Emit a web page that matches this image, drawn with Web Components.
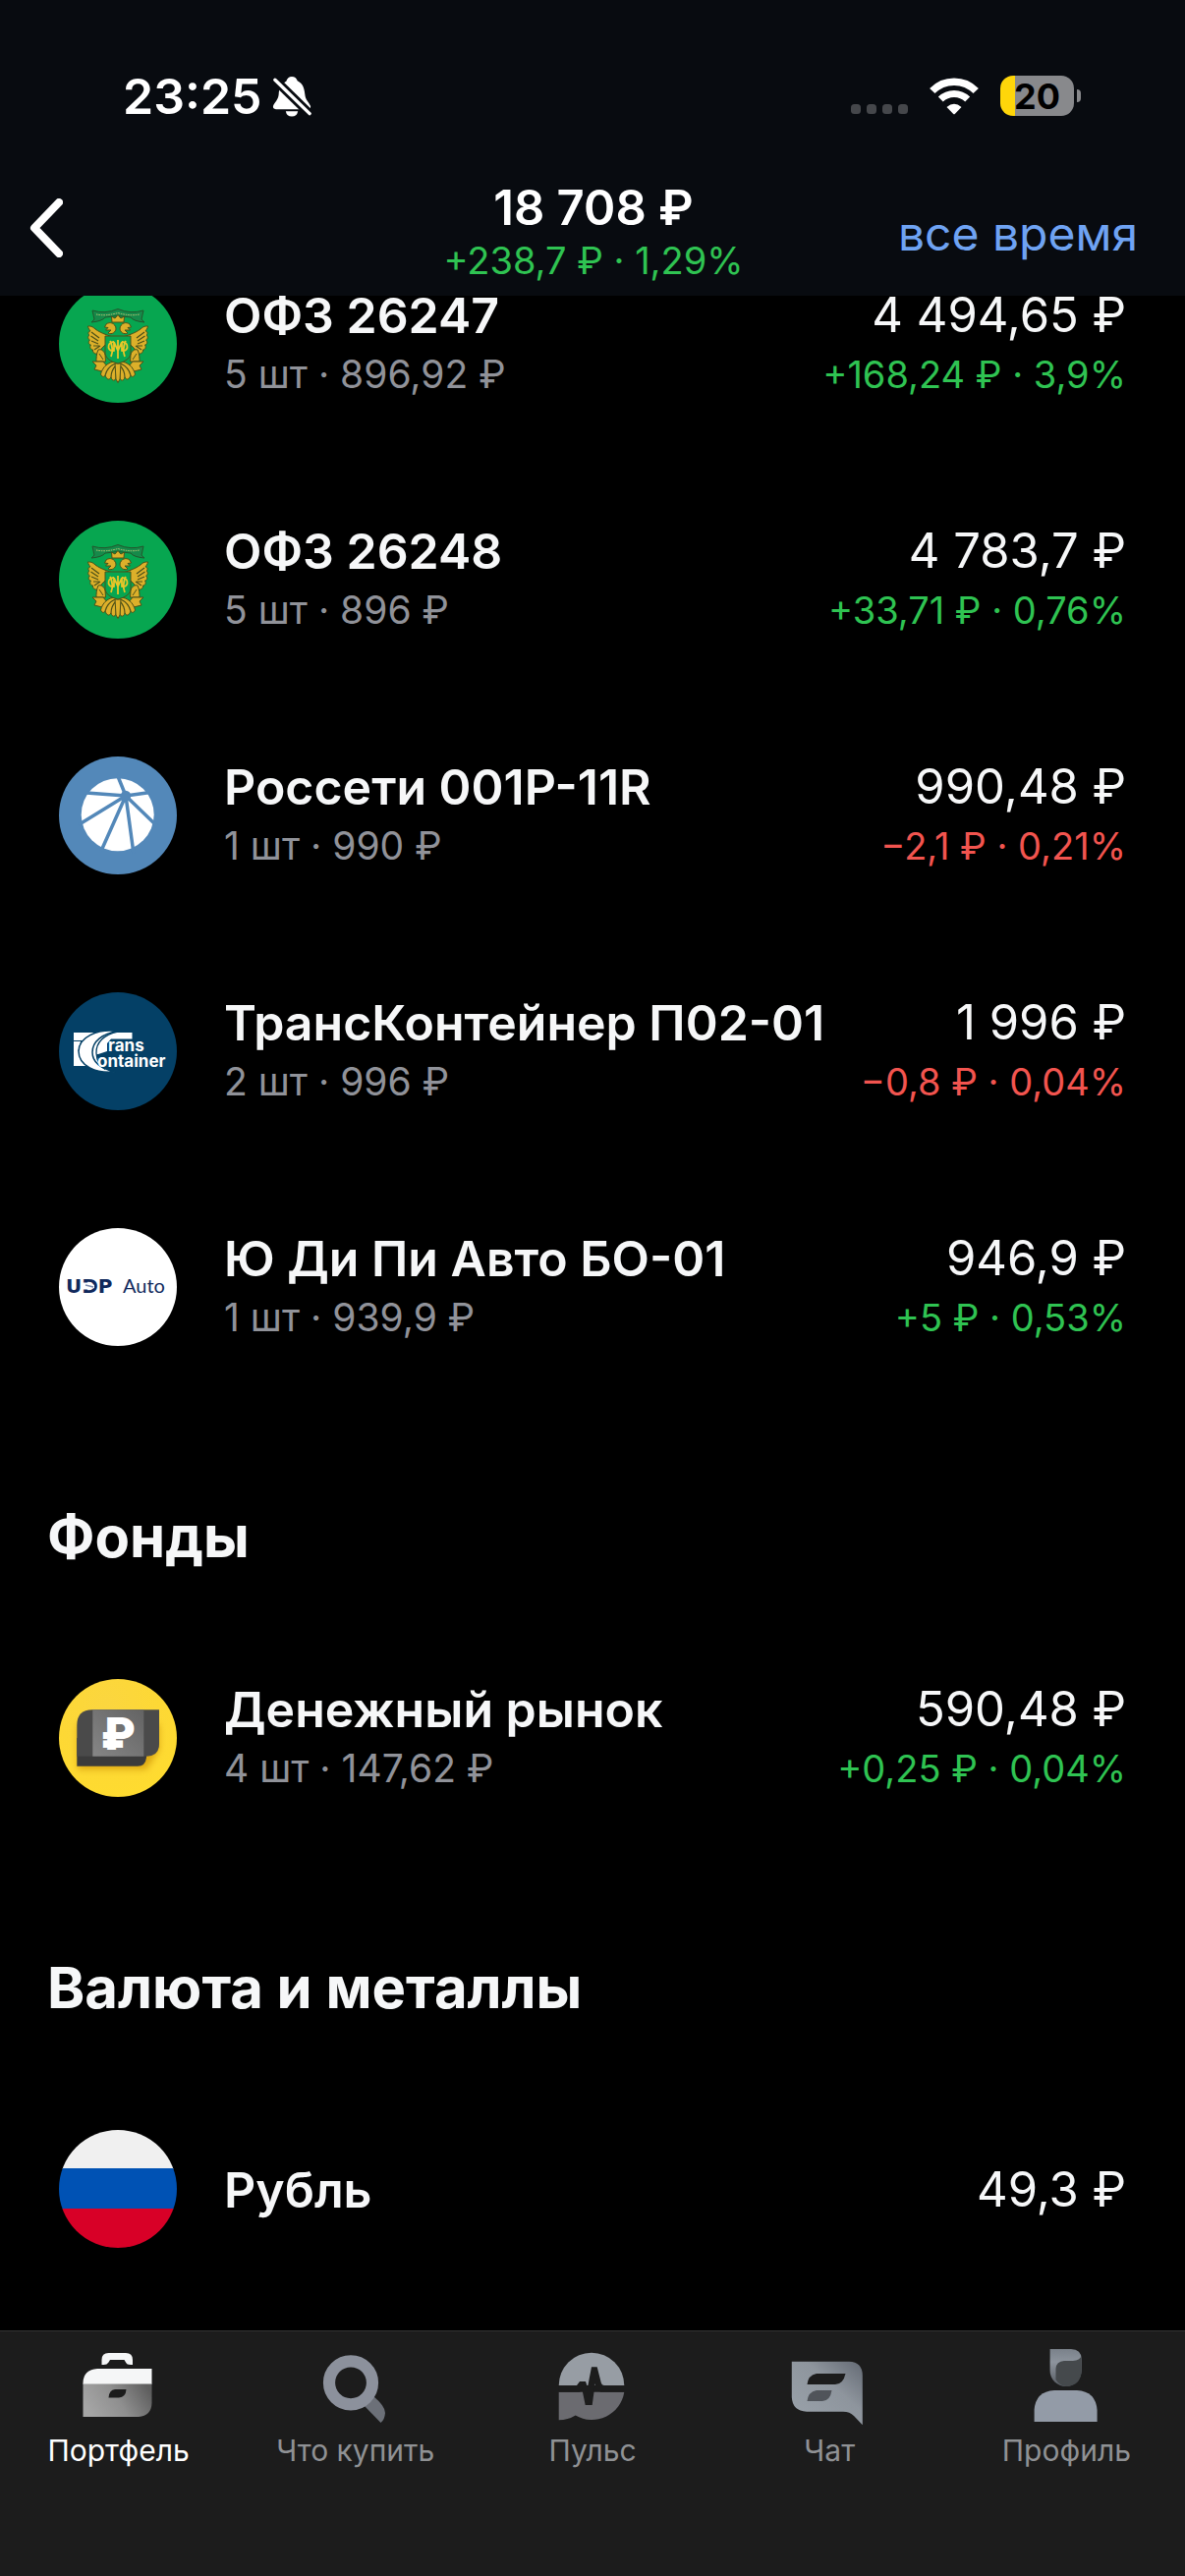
<!DOCTYPE html>
<html lang="ru">
<head>
<meta charset="utf-8">
<meta name="viewport" content="width=device-width, initial-scale=1">
<title>Портфель</title>
<style>
  html { background: #000; }
  body {
    margin: 0;
    font-family: Inter, "Noto Sans", sans-serif;
    color: #f6f7f8;
    --bar: #080b10;
    --tabbar: #1c1c1c;
    --muted: #909299;
    --up: #2fc352;
    --down: #f2544f;
    --link: #6fa3f3;
    --title: 50px;
    --amount: 49px;
    --caption: 39px;
    --delta: 38px;
    --gutter: 60px;
  }
</style>
</head>
<body>
<portfolio-app>
  <status-bar slot="header" time="23:25" battery="20"></status-bar>
  <nav-header slot="header" total="18 708 ₽" change="+238,7 ₽ · 1,29%" period="все время"></nav-header>

  <asset-section>
    <asset-row name="ОФЗ 26247" info="5 шт · 896,92 ₽" value="4 494,65 ₽" change="+168,24 ₽ · 3,9%" trend="up"><asset-logo kind="minfin"></asset-logo></asset-row>
    <asset-row name="ОФЗ 26248" info="5 шт · 896 ₽" value="4 783,7 ₽" change="+33,71 ₽ · 0,76%" trend="up"><asset-logo kind="minfin"></asset-logo></asset-row>
    <asset-row name="Россети 001Р-11R" info="1 шт · 990 ₽" value="990,48 ₽" change="−2,1 ₽ · 0,21%" trend="down"><asset-logo kind="rosseti"></asset-logo></asset-row>
    <asset-row name="ТрансКонтейнер П02-01" info="2 шт · 996 ₽" value="1 996 ₽" change="−0,8 ₽ · 0,04%" trend="down"><asset-logo kind="trans"></asset-logo></asset-row>
    <asset-row name="Ю Ди Пи Авто БО-01" info="1 шт · 939,9 ₽" value="946,9 ₽" change="+5 ₽ · 0,53%" trend="up"><asset-logo kind="udp"></asset-logo></asset-row>
  </asset-section>
  <asset-section heading="Фонды">
    <asset-row name="Денежный рынок" info="4 шт · 147,62 ₽" value="590,48 ₽" change="+0,25 ₽ · 0,04%" trend="up"><asset-logo kind="money"></asset-logo></asset-row>
  </asset-section>
  <asset-section heading="Валюта и металлы">
    <asset-row name="Рубль" value="49,3 ₽"><asset-logo kind="rub"></asset-logo></asset-row>
  </asset-section>

  <tab-bar slot="footer">
    <tab-item icon="portfolio" active>Портфель</tab-item>
    <tab-item icon="search">Что купить</tab-item>
    <tab-item icon="pulse">Пульс</tab-item>
    <tab-item icon="chat">Чат</tab-item>
    <tab-item icon="profile">Профиль</tab-item>
  </tab-bar>
</portfolio-app>

<script>
const attach = (el, html) => { el.attachShadow({ mode: "open" }).innerHTML = html; };

customElements.define("portfolio-app", class extends HTMLElement {
  connectedCallback() {
    attach(this, `<style>
      :host { display: flex; flex-direction: column; min-height: 100vh; background: #000; }
      header { position: sticky; top: 0; z-index: 1; background: var(--bar); }
      /* the list is scrolled a little way under the header */
      main { flex: 1; margin-top: -71px; }
      footer { position: sticky; bottom: 0; }
    </style>
    <header><slot name="header"></slot></header>
    <main><slot></slot></main>
    <footer><slot name="footer"></slot></footer>`);
  }
});

customElements.define("status-bar", class extends HTMLElement {
  connectedCallback() {
    attach(this, `<style>
      :host { display: flex; justify-content: space-between; align-items: center; height: 174px; box-sizing: border-box;
        padding: 21px 106px 0 125px; color: #fff; }
      .side { display: flex; align-items: center; gap: 10px; }
      time { font-size: var(--title); line-height: 60px; font-weight: 600; }
      .right { gap: 22px; }
      svg { display: block; }
      .battery { display: flex; align-items: center; gap: 3px; }
      .cell { display: flex; align-items: center; justify-content: center; width: 75px; height: 41px; border-radius: 13px;
        background: linear-gradient(90deg, #ffd60a 15px, #88898c 15px);
        color: #000; font-size: 36px; line-height: 40px; font-weight: 700; }
      .nub { width: 4px; height: 13px; border-radius: 0 4px 4px 0; background: #88898c; }
    </style>
    <div class="side">
      <time>${this.getAttribute("time")}</time>
      <svg width="40" height="42" viewBox="0 0 42 44" role="img" aria-label="Без звука">
        <path fill="#fff" d="M15 6 Q16.500 1 21 1 Q25.500 1 27 5.500 C33 8.500 34.500 14 35 20 C35.500 26 39 28 41 32.500 Q41.500 35.500 38 35.800 L4 35.800 Q.5 35.500 1 32.500 C2.500 28.500 6.500 26 7 20 C7.300 14 9 9 15 6Z M14.500 38 H27.500 Q26.500 43.500 21 43.500 Q15.500 43.500 14.500 38Z"/>
        <path d="M3 4.500 L40.500 41" stroke="var(--bar)" stroke-width="9.500"/>
        <path d="M3 4.500 L40 40.500" stroke="#fff" stroke-width="3.600" stroke-linecap="round"/>
      </svg>
    </div>
    <div class="side right">
      <svg width="58" height="38" viewBox="0 0 58 38" fill="#45474b" aria-hidden="true">
        <rect x="0" y="27" width="10" height="10" rx="3.500"/><rect x="16" y="27" width="10" height="10" rx="3.500"/><rect x="32" y="27" width="10" height="10" rx="3.500"/><rect x="48" y="27" width="10" height="10" rx="3.500"/>
      </svg>
      <svg width="50" height="38" viewBox="0 0 50 38" fill="none" stroke="#fff" role="img" aria-label="Wi-Fi">
        <path d="M2.800 13.500 A31 31 0 0 1 47.200 13.500" stroke-width="7.500"/>
        <path d="M11.300 22 A19.500 19.500 0 0 1 38.700 22" stroke-width="7"/>
        <path d="M17.500 30 Q25 23.500 32.500 30 L26 36.800 Q25 37.800 24 36.800Z" fill="#fff" stroke="none"/>
      </svg>
      <div class="battery"><span class="cell">${this.getAttribute("battery")}</span><span class="nub"></span></div>
    </div>`);
  }
});

customElements.define("nav-header", class extends HTMLElement {
  connectedCallback() {
    attach(this, `<style>
      :host { display: grid; grid-template-columns: 1fr auto 1fr; align-items: center; height: 127px; padding: 0 48px 0 18px; }
      button { justify-self: start; padding: 0 12px 12px; border: 0; background: none; color: #fff; }
      svg { display: block; }
      .sum { text-align: center; padding-left: 32px; box-sizing: border-box; }
      h1 { margin: 0; font-size: var(--amount); line-height: 54px; font-weight: 600; color: #fff; }
      p { margin: 0; font-size: var(--delta); line-height: 52px; color: var(--up); }
      a { justify-self: end; font-size: 48px; line-height: 60px; color: var(--link); text-decoration: none; }
    </style>
    <button type="button" aria-label="Назад"><svg width="34" height="60" viewBox="0 0 34 60" fill="none" stroke="#fff" stroke-width="8" stroke-linecap="round" stroke-linejoin="round"><path d="M30 4 L5 30 L30 56"/></svg></button>
    <div class="sum"><h1>${this.getAttribute("total")}</h1><p>${this.getAttribute("change")}</p></div>
    <a href="#period">${this.getAttribute("period")}</a>`);
  }
});

customElements.define("asset-section", class extends HTMLElement {
  connectedCallback() {
    const h = this.getAttribute("heading");
    attach(this, `<style>
      :host { display: block; }
      h2 { margin: 0; padding: 98px 48px 49px; font-size: 58px; line-height: 72px; font-weight: 700; }
    </style>${h ? `<h2>${h}</h2>` : ""}<slot></slot>`);
  }
});

customElements.define("asset-row", class extends HTMLElement {
  connectedCallback() {
    const a = n => this.getAttribute(n) || "";
    const line = (c, t) => t ? `<span class="${c}">${t}</span>` : "";
    attach(this, `<style>
      :host { display: flex; align-items: center; height: 240px; padding: 0 var(--gutter); white-space: nowrap; }
      .col { display: flex; flex-direction: column; line-height: 60px; padding: 2px 0 0 48px; }
      .col:last-child { margin-left: auto; padding-left: 24px; align-items: flex-end; }
      .name { font-size: var(--title); font-weight: 600; }
      .value { font-size: var(--amount); }
      .info { font-size: var(--caption); color: var(--muted); }
      .change { font-size: var(--delta); }
      .up { color: var(--up); }
      .down { color: var(--down); }
    </style>
    <slot></slot>
    <div class="col">${line("name", a("name"))}${line("info", a("info"))}</div>
    <div class="col">${line("value", a("value"))}${line("change " + a("trend"), a("change"))}</div>`);
  }
});

const half = `
  <path d="M57 54 C50 51 44 50 37 45 C34 42 32 42 29.500 42 C30 45 31.500 46 32 47 C29.500 47.500 29.500 50 31 51 C29 53 29.500 55 31.500 56 C29.500 58 30 60.500 32.500 61 C31 63 32 66 34.500 66 C34 69 37 70.500 39 70 L44 64 L48 60 L50 57Z"/>
  <path d="M33 48 L41 54 M32.500 52 L40 57 M33 57 L40 60 M35 62 L41 62 M36 66 L42 62" fill="none" stroke-width="1.200"/>
  <path d="M48 40 C52 37 57 39 58 44 C58 48 54 51 50 49 L53 46 L47.500 46 L50 43.500 L46.500 43Z"/>
  <path d="M40 66 C43 65 46 67 47 71 L47.500 78 L38 78 C38 75 38 70 40 66Z M41 70 L45 76"/>
  <path d="M34 78 L45 78 L50 84 L44 88 L36 86 L38 82Z"/>
  <path d="M58 78 C50 78 44 84 42.500 91 C44 94 46 94 47 92 C49 97 51 97 53 94 C54 98 57 98 58 95Z"/>
  <path d="M57 80 Q49 84 47 92 M58 82 Q53 87 53 94" fill="none" stroke-width="1.200"/>`;

const logos = {
  minfin: `<rect width="120" height="120" fill="#07a650"/>
    <g stroke="#24552c" stroke-width="1" fill="#0b6f3c">
      <path d="M34 26 Q47 30 60 24.500 Q73 30 86 26 L84 35 L87 38 Q76 37 73 33 Q60 30 47 33 Q44 37 33 38 L36 35Z" fill="#168a4a"/>
      <path d="M38 30 Q48 32 60 28.500 Q72 32 82 30" fill="none" stroke="#c9c878" stroke-dasharray="1.500 1"/>
    </g>
    <g fill="#dcb02a" stroke="#4c5018" stroke-width="1">
      <g>${half}</g><g transform="matrix(-1 0 0 1 120 0)">${half}</g>
      <path d="M54 38 L53.500 32 L57 34 L60 30.500 L63 34 L66.500 32 L66 38Z"/>
      <path d="M57 80 H63 L62 96 L60 99.500 L58 96Z"/>
      <path d="M47 52 H73 V70 Q72 77 60 80 Q48 77 47 70Z" fill="#07a650"/>
    </g>
    <path d="M60 56 V75 M52 57 Q56 65 53 73 M68 57 Q64 65 67 73 M56 58 Q50 58 50.500 64 Q52 68 56 67 V58 L60 67 L64 58 V67 Q68 68 69.500 64 Q70 58 64 58" fill="none" stroke="#e8c628" stroke-width="1.800"/>`,
  rosseti: `<rect width="120" height="120" fill="#5388b9"/>
    <circle cx="59.700" cy="59.200" r="37" fill="#fff"/>
    <circle cx="68" cy="40" r="5.200" fill="#5388b9"/>
    <path d="M68 40 L59.500 19 M68 40 L28 37 M68 40 L93 36.500 M68 40 L20 69.500 M68 40 L100 71 M68 40 L43 96 M68 40 L76 99" stroke="#5388b9" stroke-width="3.500"/>`,
  trans: `<rect width="120" height="120" fill="#044066"/>
    <path d="M15 41 H74.500 V47.500 H53 L49 52 V60 L40 63 V75 H15Z" fill="#fff"/>
    <path d="M15 49.500 H26 M23 49 L20 60" stroke="#044066" stroke-width="1.200"/>
    <path d="M60 39.500 C38 37 20 46 20 60 C20 75 38 83 57 81 C44 78 34 72 34 61 C34 50 44 42 60 39.500Z" fill="#fff" stroke="#044066" stroke-width="1.500"/>
    <path d="M60 40 C46 43 37.500 51 38 62 C38.500 69 41 75 47 78.500" fill="none" stroke="#044066" stroke-width="1.300"/>
    <path d="M38.500 63 H50 V78 H46 Q39 70 38.500 63Z" fill="#044066"/>
    <text x="50" y="60" font-family="Inter" font-weight="700" font-size="17" fill="#fff">rans</text>
    <text x="39" y="75.500" font-family="Inter" font-weight="700" font-size="17" fill="#fff">ontainer</text>`,
  udp: `<rect width="120" height="120" fill="#fff"/>
    <g fill="#10295c"><text x="7" y="66" font-family="DejaVu Sans" font-weight="700" font-size="20">UDP</text>
    <text x="65" y="66" font-family="Lato" font-size="20">Auto</text></g>
    <path d="M23 55.500 H32 L36 58 V61 L32 62.500 H23Z" fill="#fff"/><path d="M27 58 L35 60" stroke="#7b8bae" stroke-width="1.500"/>`,
  money: `<defs><radialGradient id="y" cx=".4" cy=".2" r=".9"><stop offset="0" stop-color="#fbd63f"/><stop offset=".5" stop-color="#fdd835"/><stop offset="1" stop-color="#ffdc2e"/></radialGradient>
      <linearGradient id="g" x1="0" y1="1" x2="1" y2="0"><stop offset="0" stop-color="#868686"/><stop offset="1" stop-color="#636363"/></linearGradient>
      <filter id="s" x="-20%" y="-20%" width="140%" height="150%"><feGaussianBlur stdDeviation="3"/></filter></defs>
    <rect width="120" height="120" fill="url(#y)"/>
    <path d="M19 46 H102 V72 L89 92 H19Z" fill="#c98a00" opacity=".6" filter="url(#s)"/>
    <path d="M18.300 60 H89 V80 Q88 88.700 80 88.700 H18.300Z" fill="#3b3b3b"/>
    <path d="M34 31.300 H102 V66 Q102 78.700 89 78.700 H18.300 V47 Q18.300 31.300 34 31.300Z" fill="#4a4a4a"/>
    <rect x="34.300" y="31.300" width="52" height="47.400" fill="url(#g)"/>
    <text x="60" y="72" text-anchor="middle" font-family="Inter" font-weight="900" font-size="45" fill="#fff">₽</text>`,
  rub: `<rect width="120" height="40" fill="#f0f0f0"/><rect y="39" width="120" height="42" fill="#0052b4"/><rect y="80" width="120" height="40" fill="#d80027"/>`
};

customElements.define("asset-logo", class extends HTMLElement {
  connectedCallback() {
    attach(this, `<style>
      :host { display: block; flex: none; width: 120px; height: 120px; border-radius: 50%; overflow: hidden; }
      svg { display: block; width: 100%; height: 100%; }
    </style><svg viewBox="0 0 120 120" aria-hidden="true">${logos[this.getAttribute("kind")]}</svg>`);
  }
});

customElements.define("tab-bar", class extends HTMLElement {
  connectedCallback() {
    attach(this, `<style>
      :host { display: block; }
      nav { display: grid; grid-template-columns: repeat(5, 1fr); height: 250px; box-sizing: border-box;
        border-top: 1px solid #333; background: var(--tabbar); }
    </style><nav><slot></slot></nav>`);
  }
});

const tabs = {
  portfolio: `<defs><linearGradient id="b" x1="0" y1=".6" x2="1" y2=".3"><stop offset="0" stop-color="#a6a6a6"/><stop offset=".5" stop-color="#8f8f8f"/><stop offset="1" stop-color="#5e5e5e"/></linearGradient></defs>
    <path d="M27.500 22 V17 Q27.500 10 34.500 10 H52 Q59 10 59 17 V22 H57 Q53 22 52 19.500 L50.500 17 H36 L34.500 19.500 Q33 22 29.500 22Z" fill="#f5f6f7"/>
    <path d="M23 26 H78.500 V42 H8.500 V40 Q9 27 23 26Z" fill="#f5f6f7"/>
    <path d="M8.500 41.500 H78.500 V61 Q78 74 65 75 H8.500Z" fill="url(#b)"/>
    <path d="M41 47 H52.500 Q52 55 45 55.500 H34.500 Q35 47.500 41 47Z" fill="#1c1c1c"/>`,
  search: `<path d="M53 63 L63 54 Q75 64 75 71 Q74.500 78 70.500 81Z" fill="#6c7078"/><circle cx="40" cy="40.300" r="22" fill="none" stroke="#8c919c" stroke-width="12.200"/>`,
  pulse: `<path d="M10.700 43 A33.300 33.300 0 0 1 77.300 43Z" fill="#979da4"/>
    <path d="M10.700 49.700 H77.300 A33.300 33.300 0 0 1 27.700 73.500 Q20 78.300 10.700 78.300Z" fill="#6b6b70"/>
    <path d="M10.700 43 H29 L32 39 H38 L40 45 L44 24.300 H49.700 L53.700 40 Q54.500 43 57 43 H78 V49.700 H53.500 Q48.500 48 47.700 41 L44.700 63 H37.700 L34.300 46.500 L32 49.700 H10.700Z" fill="#1c1c1c"/>`,
  chat: `<defs><linearGradient id="c" x1="0" y1="1" x2="1" y2="0"><stop offset="0" stop-color="#9ba3ab"/><stop offset=".6" stop-color="#8e959d"/><stop offset="1" stop-color="#646a74"/></linearGradient></defs>
    <path d="M6.800 18.700 H65 Q78.800 19 78.800 33 V83.300 L70 74 Q66 69.700 59 69.700 H22 Q7.500 69 6.800 55Z" fill="url(#c)"/>
    <path d="M32 31 H61.500 Q59 42 51 42 H22.500 Q23.500 32.500 32 31Z" fill="#1c1c1c"/>
    <path d="M32 48 H47.500 Q46 58.500 38 59 H22.500 Q23.500 49.500 32 48Z" fill="#50545a"/>`,
  profile: `<defs><linearGradient id="p" x1="0" y1="0" x2="0" y2="1"><stop offset="0" stop-color="#7a818a"/><stop offset=".35" stop-color="#8d949d"/><stop offset="1" stop-color="#565b62"/></linearGradient></defs>
    <path d="M28.600 6 H50 Q60.600 6.500 60.600 16 V28 A16 16 0 0 1 28.600 28Z" fill="url(#p)"/>
    <path d="M60.600 13 V28 Q60 43.500 45 44 Q38 43 34.500 37 V26 Q35 18.500 43 18 H52 Q59 17.500 60.600 13Z" fill="#45494c"/>
    <path d="M12.600 80 V68 Q14 49 33 48 H56 Q75 49 76.600 68 V80Z" fill="#939ba7"/>`
};

customElements.define("tab-item", class extends HTMLElement {
  connectedCallback() {
    attach(this, `<style>
      :host { display: block; color: #8f9194; }
      :host([active]) { color: #fff; }
      button { display: flex; flex-direction: column; align-items: center; width: 100%; padding: 12px 0 0;
        border: 0; background: none; color: inherit; font: 400 30px/38px Inter, "Noto Sans", sans-serif; white-space: nowrap; }
    </style>
    <button type="button"><svg width="90" height="90" viewBox="0 0 90 90" aria-hidden="true">${tabs[this.getAttribute("icon")]}</svg><span><slot></slot></span></button>`);
  }
});
</script>
</body>
</html>
